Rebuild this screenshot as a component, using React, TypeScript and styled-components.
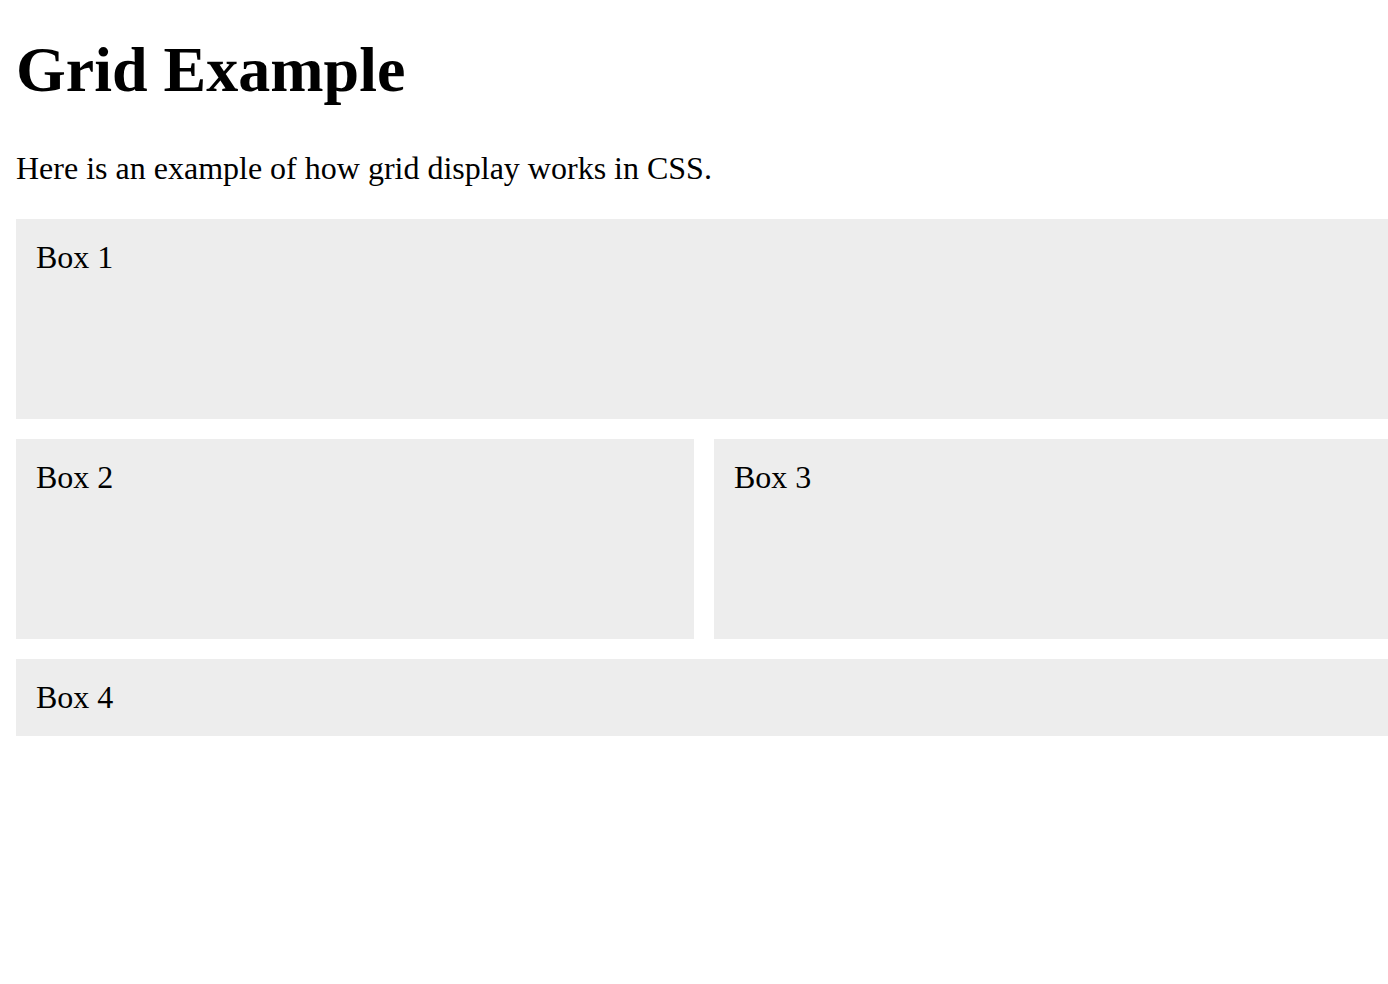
import React, { FC } from 'react';
import styled, { createGlobalStyle } from 'styled-components';

const GlobalStyle = createGlobalStyle`
  html {
    overflow: hidden;
  }
  body {
    margin: 0;
    padding: 33px 0 0 16px;
    font-family: "Liberation Serif", "Times New Roman", serif;
    font-size: 32px;
    color: #000;
    background: #fff;
  }
`

const Title = styled.h1`
    font-size: 64px;
    font-weight: bold;
    margin: 0 0 43px;
`
const Intro = styled.p`
    margin: 0 0 32px;
`
const Grid = styled.div`
    display: grid;
    grid-template-columns: 1fr 1fr;
    gap: 20px;
    width: 1376px;
`
const Box = styled.div<{ $wide?: boolean; $tall?: boolean }>`
    background-color: #ededed;
    padding: 20px;
    grid-column: ${p => (p.$wide ? 'span 2' : 'auto')};
    min-height: ${p => (p.$tall ? '160px' : '0')};
`

const boxes = [
    { label: 'Box 1', wide: true, tall: true },
    { label: 'Box 2', wide: false, tall: true },
    { label: 'Box 3', wide: false, tall: true },
    { label: 'Box 4', wide: true, tall: false },
];

const App: FC = () => {
    return (
        <>
            <GlobalStyle />
            <Title>Grid Example</Title>
            <Intro>Here is an example of how grid display works in CSS.</Intro>
            <Grid>
                {boxes.map(b => (
                    <Box key={b.label} $wide={b.wide} $tall={b.tall}>{b.label}</Box>
                ))}
            </Grid>
        </>
    );
};

export default App;
